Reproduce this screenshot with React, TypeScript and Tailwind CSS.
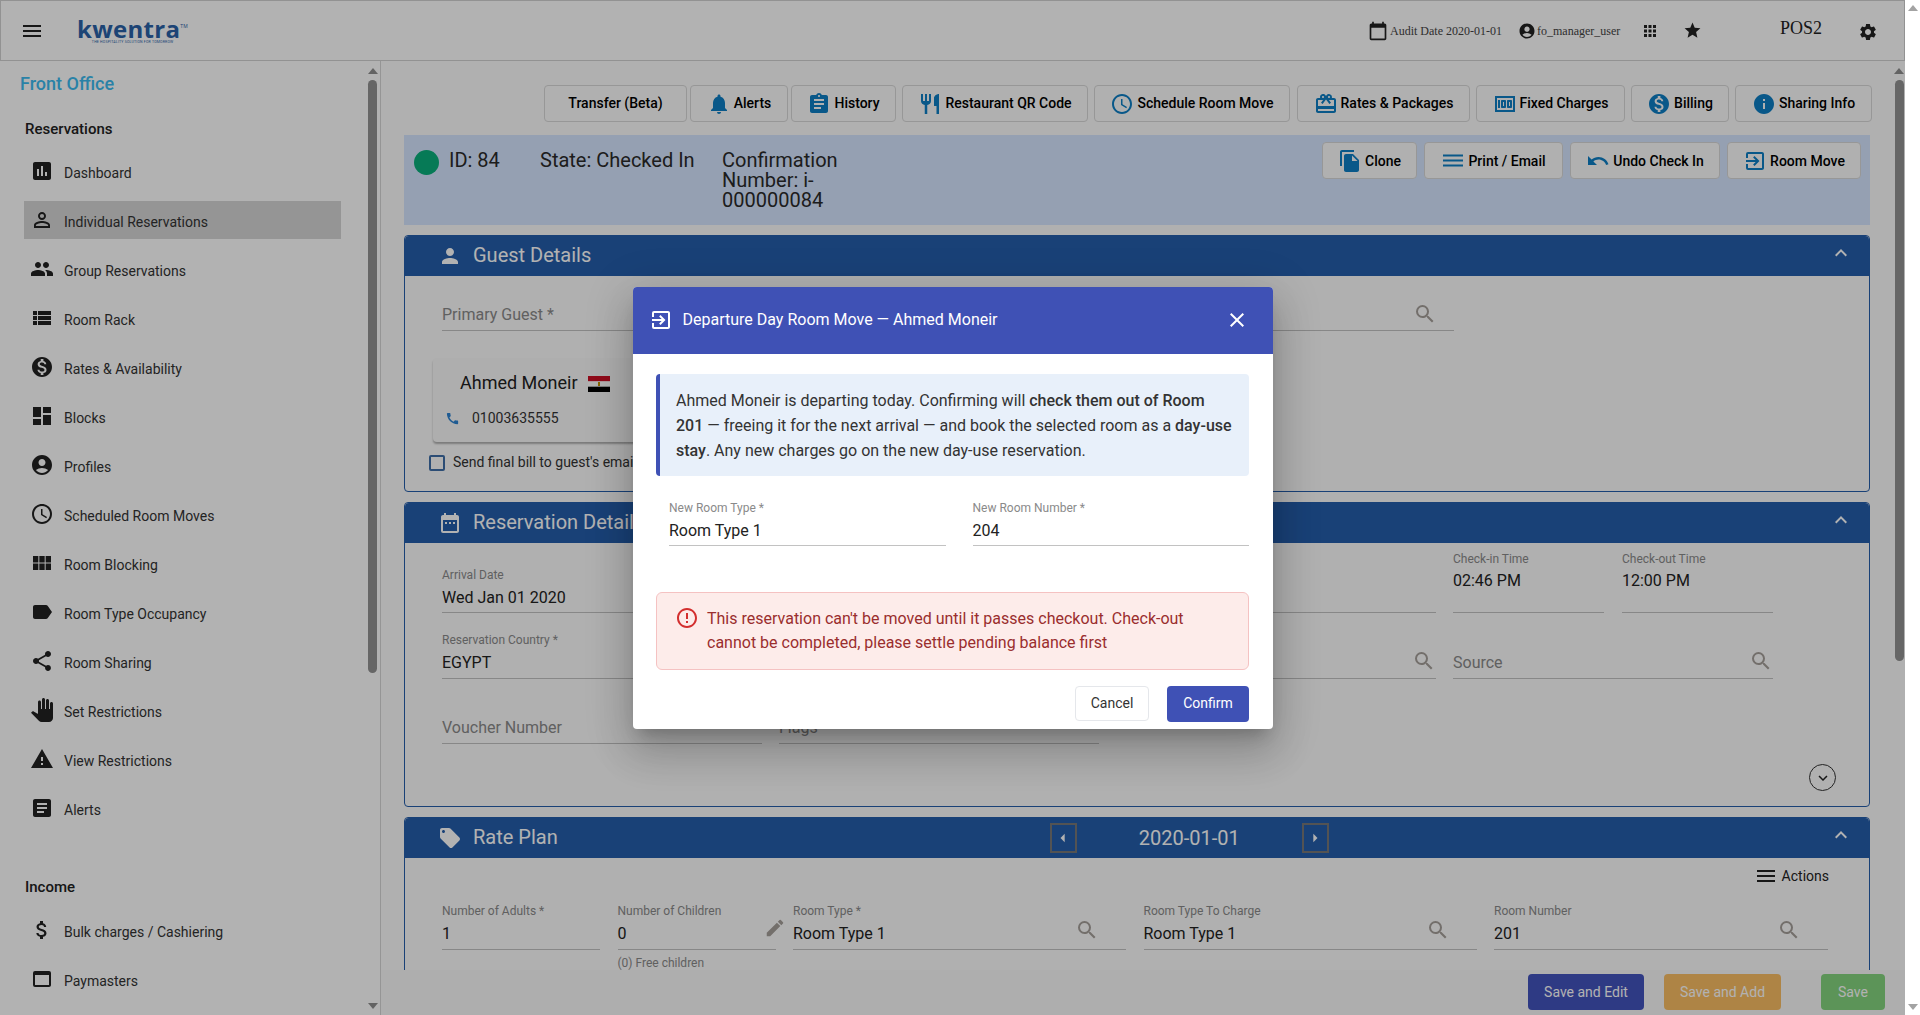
import React from 'react';
import {
  MdAccessTime, MdAccountCircle, MdApps, MdArrowLeft, MdArrowRight, MdArticle, MdAssessment, MdAssignment,
  MdAttachMoney, MdCall, MdCalendarToday, MdCardGiftcard, MdClose, MdDashboard, MdDateRange, MdDehaze, MdEdit, MdErrorOutline,
  MdExitToApp, MdExpandLess, MdFileCopy, MdGroup, MdInfo, MdKeyboardArrowDown, MdLabel, MdLocalOffer, MdMenu,
  MdMoney, MdMonetizationOn, MdNotifications, MdPanTool, MdPerson, MdPermIdentity, MdRestaurant,
  MdSearch, MdSettings, MdShare, MdStar, MdUndo, MdViewList, MdViewModule, MdWarning, MdWebAsset,
} from 'react-icons/md';

const Arrow = ({ down = false, color = '#8f8f8f' }: { down?: boolean; color?: string }) => (
  <svg width="10" height="6" viewBox="0 0 10 6" className="shrink-0">
    <polygon points={down ? '0,0 10,0 5,6' : '5,0 10,6 0,6'} fill={color} />
  </svg>
);

const nav = [
  { label: 'Dashboard', icon: <MdAssessment /> },
  { label: 'Individual Reservations', icon: <MdPermIdentity />, active: true },
  { label: 'Group Reservations', icon: <MdGroup /> },
  { label: 'Room Rack', icon: <MdViewList /> },
  { label: 'Rates & Availability', icon: <MdMonetizationOn /> },
  { label: 'Blocks', icon: <MdDashboard /> },
  { label: 'Profiles', icon: <MdAccountCircle /> },
  { label: 'Scheduled Room Moves', icon: <MdAccessTime /> },
  { label: 'Room Blocking', icon: <MdViewModule /> },
  { label: 'Room Type Occupancy', icon: <MdLabel /> },
  { label: 'Room Sharing', icon: <MdShare /> },
  { label: 'Set Restrictions', icon: <MdPanTool /> },
  { label: 'View Restrictions', icon: <MdWarning /> },
  { label: 'Alerts', icon: <MdArticle /> },
];

const NavItem = ({ label, icon, active }: { label: string; icon: React.ReactNode; active?: boolean }) => (
  <div className={`h-[38px] mb-[11px] flex items-center pl-[6px] gap-[10px] ${active ? 'bg-[#d6d6d6]' : ''}`}>
    <span className="text-[24px] text-[#222]">{icon}</span>
    <span className="text-[14px] mt-1 text-[#333]">{label}</span>
  </div>
);

const ActionButton = ({ label, icon, className }: { label: string; icon?: React.ReactNode; className: string }) => (
  <button className={`h-[37px] shrink-0 flex items-center justify-center gap-[3px] rounded border border-[#d8d8d8] bg-[#fdfdfd] text-[14px] font-medium text-black ${className}`}>
    {icon && <span className="text-[24px] text-[#0d7ec4]">{icon}</span>}
    {label}
  </button>
);

const PanelHeader = ({ title, icon, children }: { title: string; icon: React.ReactNode; children?: React.ReactNode }) => (
  <div className="h-[40px] bg-[#255eab] rounded-t flex items-center text-white">
    <div className="flex items-center gap-[11px] pl-[33px] shrink-0">
      <span className="text-[24px]">{icon}</span>
      <span className="-mt-[2px] text-[20px]">{title}</span>
    </div>
    {children}
    <MdExpandLess className="ml-auto mr-[16px] -mt-[6px] text-[24px]" />
  </div>
);

type FieldProps = { label?: string; value?: string; search?: string; placeholder?: string; tight?: boolean; className?: string };

// search holds the classes that place the magnifier inside the field
const Field = ({ label, value, search, placeholder, tight, className = '' }: FieldProps) => (
  <div className={`relative flex flex-col justify-end border-b border-[#c2c2c2] ${className}`}>
    {label && <div className="text-[12px] leading-4 mb-[3px] text-[#8a8a8a]">{label}</div>}
    {value && <div className={`text-[16px] leading-6 text-[#222] ${tight ? 'pb-[2px]' : 'pb-[3px]'}`}>{value}</div>}
    {placeholder && <div className="text-[16px] leading-6 pb-[3px] text-[#8a8a8a]">{placeholder}</div>}
    {search && <MdSearch className={`absolute text-[24px] text-[#a59f9a] ${search}`} />}
  </div>
);

export default function App() {
  return (
    <div className="h-screen flex overflow-hidden bg-white font-['Roboto',sans-serif]">
      <div className="relative flex-1 min-w-0 flex flex-col">
        {/* top bar */}
        <header className="h-[61px] shrink-0 flex items-center bg-white border border-[#d2d2d2]">
          <MdMenu className="ml-[19px] text-[24px] text-[#222]" />
          <div className="ml-[33px] flex flex-col items-center -mt-[2px]">
            <div className="font-['Open_Sans',sans-serif] font-bold text-[#2a62a8] text-[24px] leading-[22px] tracking-[0.3px]">
              kwentra<span className="text-[5px] font-normal align-[10px]">TM</span>
            </div>
            <div className="text-[3.5px] leading-[4px] tracking-[0.2px] text-[#2a62a8]">THE HOSPITALITY SOLUTION FOR TOMORROW</div>
          </div>
          <div className="ml-auto flex items-center font-['Liberation_Serif',serif] text-[12px] text-[#444]">
            <MdCalendarToday className="text-[20px] text-[#222]" />
            <span className="ml-[2px] w-[128px]">Audit Date 2020-01-01</span>
            <MdAccountCircle className="text-[18px] text-[#222]" />
            <span className="ml-[1px] w-[104px]">fo_manager_user</span>
            <MdApps className="text-[18px] text-[#222]" />
            <MdStar className="ml-[24px] text-[19px] text-[#222]" />
            <span className="ml-[78px] -mt-[5px] text-[18px] text-[#222]">POS2</span>
            <MdSettings className="ml-[36px] mr-[26px] mt-[3px] text-[20px] text-[#222]" />
          </div>
        </header>

        <div className="flex-1 min-h-0 flex">
          {/* side menu */}
          <aside className="w-[381px] shrink-0 flex border-r border-[#d6d6d6] bg-white">
            <div className="flex-1 min-w-0">
              <div className="ml-[20px] mt-[12px] h-[22px] leading-[22px] text-[18px] font-medium text-[#3cbaf0]">Front Office</div>
              <div className="ml-[25px] mt-[24px] h-[20px] leading-[20px] text-[15px] font-medium text-[#222]">Reservations</div>
              <nav className="ml-[24px] w-[317px] mt-[13px]">
                {nav.map((item) => <NavItem key={item.label} {...item} />)}
              </nav>
              <div className="ml-[25px] mt-[50px] h-[20px] leading-[20px] text-[15px] font-medium text-[#222]">Income</div>
              <div className="ml-[24px] w-[317px] mt-[14px]">
                <NavItem label="Bulk charges / Cashiering" icon={<MdAttachMoney />} />
                <NavItem label="Paymasters" icon={<MdWebAsset />} />
              </div>
            </div>
            <div className="w-[9px] mr-[3px] flex flex-col items-center pt-[7px] pb-[6px]">
              <Arrow />
              <div className="w-[9px] h-[593px] mt-[6px] rounded-full bg-[#929292]" />
              <div className="mt-auto"><Arrow down /></div>
            </div>
          </aside>

          {/* page */}
          <main className="flex-1 min-w-0 flex flex-col bg-[#fcfcfc]">
            <div className="flex-1 min-h-0 flex">
              <div className="flex-1 min-w-0 overflow-hidden pl-[23px] pr-[20px]">
                <div className="mt-[24px] -mr-[2px] flex justify-end gap-[6px]">
                  <ActionButton label="Transfer (Beta)" className="w-[143px]" />
                  <ActionButton label="Alerts" icon={<MdNotifications />} className="w-[98px] -ml-[3px]" />
                  <ActionButton label="History" icon={<MdAssignment />} className="w-[105px] -ml-[3px]" />
                  <ActionButton label="Restaurant QR Code" icon={<MdRestaurant />} className="w-[186px]" />
                  <ActionButton label="Schedule Room Move" icon={<MdAccessTime />} className="w-[196px]" />
                  <ActionButton label="Rates & Packages" icon={<MdCardGiftcard />} className="w-[173px] ml-[1px]" />
                  <ActionButton label="Fixed Charges" icon={<MdMoney />} className="w-[149px]" />
                  <ActionButton label="Billing" icon={<MdMonetizationOn />} className="w-[98px]" />
                  <ActionButton label="Sharing Info" icon={<MdInfo />} className="w-[137px]" />
                </div>

                <div className="mt-[13px] h-[90px] bg-[#d6e6ff] flex items-start pl-[10px] pr-[9px] text-[20px] leading-5 text-[#2a2a2a]">
                  <div className="mt-[15px] w-[25px] h-[25px] rounded-full bg-[#0aaf7b] shrink-0" />
                  <div className="mt-[15px] ml-[10px] w-[91px] shrink-0">ID: 84</div>
                  <div className="mt-[15px] w-[182px] shrink-0">State: Checked In</div>
                  <div className="mt-[15px] w-[135px] shrink-0">Confirmation Number: i-000000084</div>
                  <div className="ml-auto mt-[7px] flex gap-[7px]">
                    <ActionButton label="Clone" icon={<MdFileCopy />} className="w-[95px]" />
                    <ActionButton label="Print / Email" icon={<MdDehaze />} className="w-[139px]" />
                    <ActionButton label="Undo Check In" icon={<MdUndo />} className="w-[150px]" />
                    <ActionButton label="Room Move" icon={<MdExitToApp />} className="w-[134px]" />
                  </div>
                </div>

                {/* guest details */}
                <section className="mt-[10px] border border-[#255eab] rounded h-[257px]">
                  <PanelHeader title="Guest Details" icon={<MdPerson />} />
                  <div className="pl-[37px] pt-[25px]">
                    <Field placeholder="Primary Guest *" search="right-[17px] bottom-[4px]" className="w-[1012px] h-[30px]" />
                  </div>
                  <div className="ml-[28px] mt-[27px] w-[300px] h-[84px] rounded bg-[#fafafa] shadow-[0_2px_2px_rgba(0,0,0,0.3)] pt-[12px]">
                    <div className="pl-[27px] flex items-center gap-[10px] h-[24px] text-[18px] text-[#222]">
                      Ahmed Moneir
                      <svg width="22" height="16" viewBox="0 0 22 16" className="mt-1">
                        <rect width="22" height="5.4" fill="#ce1126" />
                        <rect y="5.4" width="22" height="5.3" fill="#fff" />
                        <rect y="10.7" width="22" height="5.3" fill="#000" />
                        <rect x="10" y="6" width="2" height="4" fill="#c09300" />
                      </svg>
                    </div>
                    <div className="pl-[12px] mt-[14px] flex items-center gap-[12px] text-[14px] text-[#333]">
                      <MdCall className="text-[15px] text-[#2d83d2]" />
                      01003635555
                    </div>
                  </div>
                  <div className="ml-[24px] mt-[10px] flex items-center gap-[8px] text-[14px] text-[#333]">
                    <span className="w-[16px] h-[16px] border-2 border-[#3f6fa8] rounded-[2px]" />
                    Send final bill to guest's email
                  </div>
                </section>

                {/* reservation details */}
                <section className="mt-[10px] border border-[#255eab] rounded h-[305px]">
                  <PanelHeader title="Reservation Details" icon={<MdDateRange />} />
                  <div className="ml-[37px] mt-[7px] grid grid-cols-[320px_320px_320px_320px] grid-rows-[63px_50px_49px] gap-x-[17px] gap-y-[16px]">
                    <Field label="Arrival Date" value="Wed Jan 01 2020" tight />
                    <Field />
                    <Field />
                    <div className="grid grid-cols-[151px_151px] gap-x-[18px]">
                      <div className="flex flex-col border-b border-[#c2c2c2] pt-[1px]">
                        <div className="text-[12px] leading-4 text-[#8a8a8a]">Check-in Time</div>
                        <div className="mt-[2px] text-[16px] leading-6 text-[#222]">02:46 PM</div>
                      </div>
                      <div className="flex flex-col border-b border-[#c2c2c2] pt-[1px]">
                        <div className="text-[12px] leading-4 text-[#8a8a8a]">Check-out Time</div>
                        <div className="mt-[2px] text-[16px] leading-6 text-[#222]">12:00 PM</div>
                      </div>
                    </div>
                    <Field label="Reservation Country *" value="EGYPT" />
                    <Field />
                    <Field search="right-0 bottom-[5px]" />
                    <Field placeholder="Source" search="right-0 bottom-[5px]" />
                    <Field placeholder="Voucher Number" />
                    <Field placeholder="Flags" />
                  </div>
                  <div className="mt-[20px] mr-[33px] flex justify-end">
                    <span className="w-[27px] h-[27px] rounded-full border border-[#333] flex items-center justify-center">
                      <MdKeyboardArrowDown className="text-[18px] text-[#222]" />
                    </span>
                  </div>
                </section>

                {/* rate plan */}
                <section className="mt-[10px] border border-[#255eab] rounded">
                  <PanelHeader title="Rate Plan" icon={<MdLocalOffer />}>
                    <button className="ml-[492px] w-[27px] h-[30px] border-2 border-[#777] flex items-center justify-center">
                      <MdArrowLeft className="text-[20px]" />
                    </button>
                    <span className="-mt-[1px] w-[225px] text-center text-[20px]">2020-01-01</span>
                    <button className="w-[27px] h-[30px] border-2 border-[#777] flex items-center justify-center">
                      <MdArrowRight className="text-[20px]" />
                    </button>
                  </PanelHeader>
                  <div className="flex justify-end items-center gap-[4px] mt-[6px] h-[24px] pr-[40px] text-[14px] text-[#222]">
                    <MdMenu className="text-[24px]" />
                    Actions
                  </div>
                  <div className="ml-[37px] mt-[13px] grid grid-cols-[158px_158px_333px_333px_334px] gap-x-[17.5px] h-[110px]">
                    <Field label="Number of Adults *" value="1" className="h-[49px]" />
                    <div>
                      <div className="relative">
                        <Field label="Number of Children" value="0" className="h-[49px]" />
                        <MdEdit className="absolute right-[-10px] top-[16px] text-[22px] text-[#a59f9a]" />
                      </div>
                      <div className="mt-[5px] text-[12px] leading-4 text-[#8a8a8a]">(0) Free children</div>
                    </div>
                    <Field label="Room Type *" value="Room Type 1" search="right-[27px] bottom-[7px]" className="h-[49px]" />
                    <Field label="Room Type To Charge" value="Room Type 1" search="right-[27px] bottom-[7px]" className="h-[49px]" />
                    <Field label="Room Number" value="201" search="right-[27px] bottom-[7px]" className="h-[49px]" />
                  </div>
                </section>
              </div>
              <div className="w-[15px] shrink-0 pl-[3px] flex flex-col items-center pt-[7px]">
                <Arrow />
                <div className="w-[9px] h-[581px] mt-[6px] rounded-full bg-[#929292]" />
              </div>
            </div>

            {/* footer actions */}
            <div className="h-[45px] shrink-0 bg-[#fafafa] flex items-start pt-[4px] pr-[20px] justify-end text-[14px] text-white">
              <button className="w-[116px] h-[36px] rounded bg-[#4353be]">Save and Edit</button>
              <button className="ml-[20px] w-[117px] h-[36px] rounded bg-[#f9be64]">Save and Add</button>
              <button className="ml-[40px] w-[64px] h-[36px] rounded bg-[#84d47e]">Save</button>
            </div>
          </main>
        </div>

        {/* room move dialog */}
        <div className="absolute inset-0 bg-black/30 flex items-center justify-center">
          <div className="w-[640px] h-[442px] rounded bg-white overflow-hidden flex flex-col shadow-[0_11px_15px_-7px_rgba(0,0,0,0.2),0_24px_38px_3px_rgba(0,0,0,0.14),0_9px_46px_8px_rgba(0,0,0,0.12)]">
            <div className="h-[67px] shrink-0 bg-[#3f51b5] flex items-center pl-[16px] pr-[24px] text-white">
              <MdExitToApp className="text-[24px]" />
              <span className="ml-[10px] text-[16px]">Departure Day Room Move — Ahmed Moneir</span>
              <MdClose className="ml-auto text-[24px]" />
            </div>
            <div className="px-[23.5px] pt-[20px]">
              <div className="h-[102px] rounded border-l-4 border-[#3f51b5] bg-[#e8f0fa] pl-[16px] pr-[16px] pt-[14px] text-[16px] leading-[25px] text-[#333]">
                Ahmed Moneir is departing today. Confirming will <span className="font-medium">check them out of Room 201</span> — freeing it for the next arrival — and book the selected room as a <span className="font-medium">day-use stay</span>. Any new charges go on the new day-use reservation.
              </div>
              <div className="mt-[23px] pl-[13px] grid grid-cols-2 gap-x-[27px]">
                <Field label="New Room Type *" value="Room Type 1" tight className="h-[47px]" />
                <Field label="New Room Number *" value="204" tight className="h-[47px]" />
              </div>
              <div className="mt-[46px] h-[78px] rounded-md border border-[#f5c2c2] bg-[#fdecea] flex pl-[18px] pr-[16px] pt-[13px] text-[16px] leading-6 text-[#9a2e2e]">
                <MdErrorOutline className="shrink-0 text-[24px] text-[#d32f2f]" />
                <span className="ml-[8px] pt-[1px]">This reservation can't be moved until it passes checkout. Check-out cannot be completed, please settle pending balance first</span>
              </div>
              <div className="mt-[16px] flex justify-end gap-[18px] text-[14px]">
                <button className="w-[74px] h-[35px] rounded border border-[#e5e7eb] bg-white text-[#333]">Cancel</button>
                <button className="w-[82px] h-[36px] rounded bg-[#3f51b5] text-white">Confirm</button>
              </div>
            </div>
          </div>
        </div>
      </div>

      {/* browser scrollbar */}
      <div className="w-[15px] shrink-0 bg-white flex flex-col items-center justify-between py-[5px]">
        <Arrow color="#a3a3a3" />
        <Arrow down color="#a3a3a3" />
      </div>
    </div>
  );
}
